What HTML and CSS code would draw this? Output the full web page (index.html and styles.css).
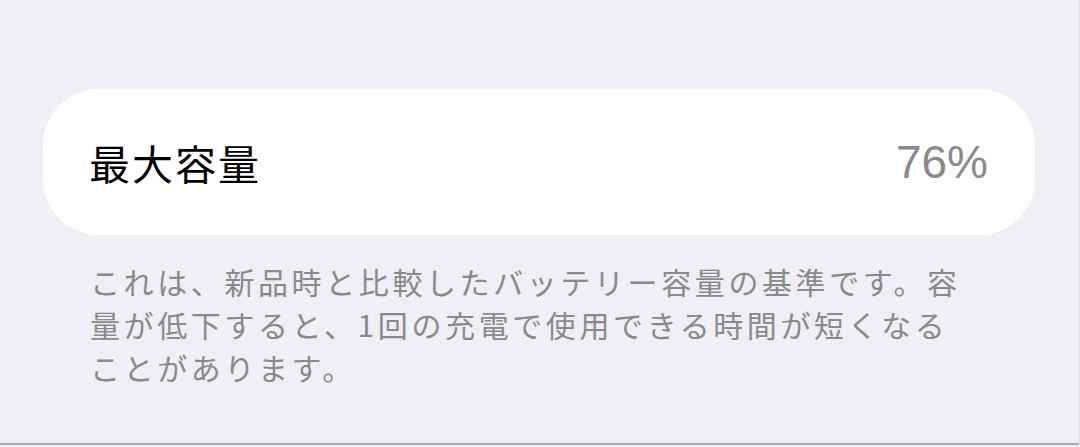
FILE: index.html
```html
<!DOCTYPE html>
<html lang="ja">
<head>
<meta charset="UTF-8" />
<meta name="viewport" content="width=device-width, initial-scale=1" />
<title>バッテリーの状態</title>
<link rel="stylesheet" href="styles.css">
</head>
<body>

<div class="screen">
  <div class="group">
    <div class="row">
      <span class="row-label">最大容量</span>
      <span class="row-value">76%</span>
    </div>
  </div>
  <p class="footnote">これは、新品時と比較したバッテリー容量の基準です。容量が低下すると、1回の充電で使用できる時間が短くなることがあります。</p>
</div>

</body>
</html>
```

FILE: styles.css
```css
html, body {
  margin: 0; padding: 0;
  background: #f0eff5;
  font-family: "Noto Sans CJK JP", "Liberation Sans", sans-serif;
}
.screen {
  height: 445px;
  padding: 89px 0 0 43px;
  box-sizing: border-box;
  border-right: 2px solid #e4e4e8;
  border-bottom: 2px solid #a9a9ad;
}
.group {
  width: 992px;
  height: 146px;
  background: #fff;
  border-radius: 56px;
  display: flex;
  align-items: center;
}
.row {
  flex: 1;
  display: flex;
  align-items: center;
  justify-content: space-between;
  padding: 0 47px 0 46px;
}
.row-label {
  font-size: 41px;
  letter-spacing: 2px;
  color: #000;
}
.row-value {
  font-family: "Liberation Sans", sans-serif;
  font-size: 46px;
  color: #8a8a8e;
}
.footnote {
  margin: 25px 0 0 47px;
  width: 882px;
  font-size: 30px;
  line-height: 43px;
  letter-spacing: 3.6px;
  color: #8a8a8e;
}
```
